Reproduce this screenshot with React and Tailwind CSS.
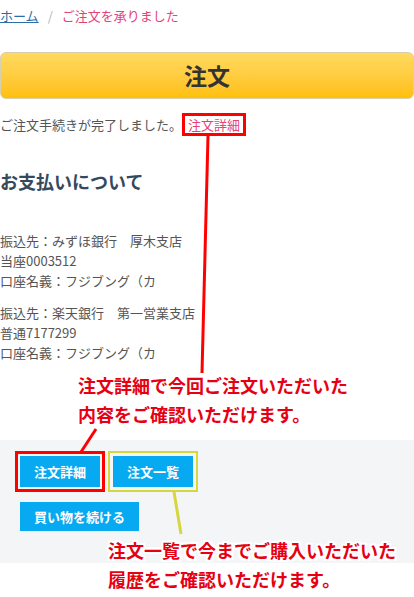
import React from 'react';

const jp = { fontFamily: '"Noto Sans CJK JP", "Noto Sans", sans-serif' };

export default function App() {
  const outline =
    '[text-shadow:2px_0_0_#fff,-2px_0_0_#fff,0_2px_0_#fff,0_-2px_0_#fff,2px_2px_0_#fff,-2px_-2px_0_#fff,2px_-2px_0_#fff,-2px_2px_0_#fff]';

  return (
    <div className="relative w-[414px] h-[597px] overflow-hidden bg-white text-[13px] text-[#555]" style={jp}>
      {/* Breadcrumb */}
      <nav className="flex items-center pt-[7px] leading-[18px]">
        <a href="#" className="text-[#2a6ea8] underline">ホーム</a>
        <span className="mx-[9px] text-[#b5b5b5]">/</span>
        <span className="text-[#e6427a]">ご注文を承りました</span>
      </nav>

      {/* Title bar */}
      <div className="mt-[27px] h-[47px] flex items-center justify-center rounded-[6px] border border-[#d8cfae] bg-gradient-to-b from-[#ffd95e] to-[#ffc000]">
        <h1 className="text-[23px] font-bold text-[#333]">注文</h1>
      </div>

      <p className="mt-[14px] leading-[23px] flex items-center">
        ご注文手続きが完了しました。
        <span className="inline-block border-[3px] border-[#f00] px-[3px] leading-[17px]">
          <a href="#" className="text-[#e6427a]">注文詳細</a>
        </span>
      </p>

      <h2 className="mt-[32px] text-[18px] leading-[26px] font-bold text-[#34495e]">お支払いについて</h2>

      <div className="mt-[37px] leading-[20px]">
        <p>振込先：みずほ銀行　厚木支店</p>
        <p>当座0003512</p>
        <p>口座名義：フジブング（カ</p>
      </div>
      <div className="mt-[12px] leading-[20px]">
        <p>振込先：楽天銀行　第一営業支店</p>
        <p>普通7177299</p>
        <p>口座名義：フジブング（カ</p>
      </div>

      {/* Buttons */}
      <div className="mt-[77px] bg-[#f4f5f7] px-[15px] pt-[11px] pb-[32px]">
        <div className="flex gap-[3px]">
          <div className="border-[3px] border-[#f00] p-[2px]">
            <button className="w-[80px] h-[31px] bg-[#07a9f0] text-white font-bold text-[13px]">注文詳細</button>
          </div>
          <div className="border-[2px] border-[#d6d63e] p-[3px]">
            <button className="w-[80px] h-[31px] bg-[#07a9f0] text-white font-bold text-[13px]">注文一覧</button>
          </div>
        </div>
        <button className="mt-[10px] ml-[5px] w-[119px] h-[29px] bg-[#07a9f0] text-white font-bold text-[13px]">買い物を続ける</button>
      </div>

      {/* Annotation lines */}
      <svg className="absolute inset-0 pointer-events-none" width="414" height="597">
        <line x1="208" y1="136" x2="202" y2="373" stroke="#f00" strokeWidth="3" />
        <line x1="81" y1="452" x2="96" y2="429" stroke="#f00" strokeWidth="3" />
        <line x1="174" y1="492" x2="181" y2="534" stroke="#d6d63e" strokeWidth="3" />
      </svg>

      {/* Annotation texts */}
      <div className={`absolute left-[78px] top-[371px] text-[18px] leading-[29px] font-bold text-[#e60012] ${outline}`}>
        <p>注文詳細で今回ご注文いただいた</p>
        <p>内容をご確認いただけます。</p>
      </div>
      <div className={`absolute left-[108px] top-[536px] text-[18px] leading-[29px] font-bold text-[#e60012] ${outline}`}>
        <p>注文一覧で今までご購入いただいた</p>
        <p>履歴をご確認いただけます。</p>
      </div>
    </div>
  );
}
